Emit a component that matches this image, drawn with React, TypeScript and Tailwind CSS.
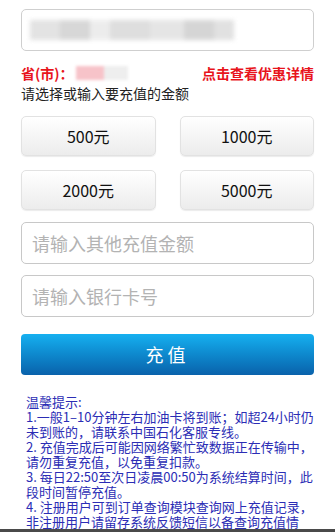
import React from "react";

const amounts = ["500元", "1000元", "2000元", "5000元"];

const tips = [
  "温馨提示:",
  "1.一般1–10分钟左右加油卡将到账；如超24小时仍",
  "未到账的，请联系中国石化客服专线。",
  "2. 充值完成后可能因网络繁忙致数据正在传输中，",
  "请勿重复充值，以免重复扣款。",
  "3. 每日22:50至次日凌晨00:50为系统结算时间，此",
  "段时间暂停充值。",
  "4. 注册用户可到订单查询模块查询网上充值记录，",
  "非注册用户请留存系统反馈短信以备查询充值情",
];

export default function App() {
  return (
    <div
      className="w-[335px] h-[532px] bg-white flex flex-col overflow-hidden"
      style={{ fontFamily: '"Noto Sans CJK SC", "Liberation Sans", sans-serif' }}
    >
      <div className="px-[21px] pt-[9px]">
        {/* Card number (blurred) */}
        <div className="h-[42px] border border-[#cfcfcf] rounded-[5px] flex items-center px-[8px] overflow-hidden">
          <div className="flex h-[20px] w-[204px] blur-[2px] opacity-80">
            <div className="w-[30px] bg-[#dcdcdc]" />
            <div className="w-[30px] bg-[#cdcdcd]" />
            <div className="w-[20px] bg-[#e8e8e8]" />
            <div className="w-[40px] bg-[#d6d6d6]" />
            <div className="w-[34px] bg-[#dfdfdf]" />
            <div className="w-[30px] bg-[#cbcbcb]" />
            <div className="w-[20px] bg-[#dadada]" />
          </div>
        </div>

        {/* Province row */}
        <div className="mt-[13px] flex items-center justify-between text-[14px] leading-[18px] font-bold text-[#e8141c]">
          <div className="flex items-center">
            <span>省(市)：</span>
            <div className="ml-[2px] h-[14px] w-[52px] flex blur-[1.5px]">
              <div className="w-[28px] bg-[#f7c3c9]" />
              <div className="w-[24px] bg-[#eeeeee]" />
            </div>
          </div>
          <span>点击查看优惠详情</span>
        </div>
        <div className="text-[14px] leading-[18px] text-[#222] mt-[2px]">
          请选择或输入要充值的金额
        </div>

        {/* Amount buttons */}
        <div className="mt-[14px] grid grid-cols-2 gap-x-[24px] gap-y-[14px]">
          {amounts.map((a) => (
            <div
              key={a}
              className="h-[40px] rounded-[5px] border border-[#e2e2e2] bg-gradient-to-b from-[#ffffff] to-[#ececec] shadow-[0_1px_1px_rgba(0,0,0,0.08)] flex items-center justify-center text-[16px] text-[#111]"
            >
              {a}
            </div>
          ))}
        </div>

        {/* Inputs */}
        <input
          className="mt-[12px] w-full h-[42px] rounded-[5px] border border-[#c8c8c8] px-[10px] text-[18px] placeholder:text-[#b3b3b3] outline-none"
          placeholder="请输入其他充值金额"
        />
        <input
          className="mt-[11px] w-full h-[42px] rounded-[5px] border border-[#c8c8c8] px-[10px] text-[18px] placeholder:text-[#b3b3b3] outline-none"
          placeholder="请输入银行卡号"
        />

        {/* Submit */}
        <button className="mt-[17px] w-full h-[41px] rounded-[4px] bg-gradient-to-b from-[#16b0f0] to-[#0a62ab] text-white text-[18px] tracking-[4px] flex items-center justify-center">
          充值
        </button>
      </div>

      {/* Notice */}
      <div className="flex-1 overflow-hidden pt-[19px] px-[26px]">
        {tips.map((t) => (
          <div key={t} className="text-[13px] leading-[15px] text-[#2b2db5] whitespace-nowrap">
            {t}
          </div>
        ))}
      </div>
      <div className="h-[3px] bg-[#4a4a4a]" />
    </div>
  );
}
